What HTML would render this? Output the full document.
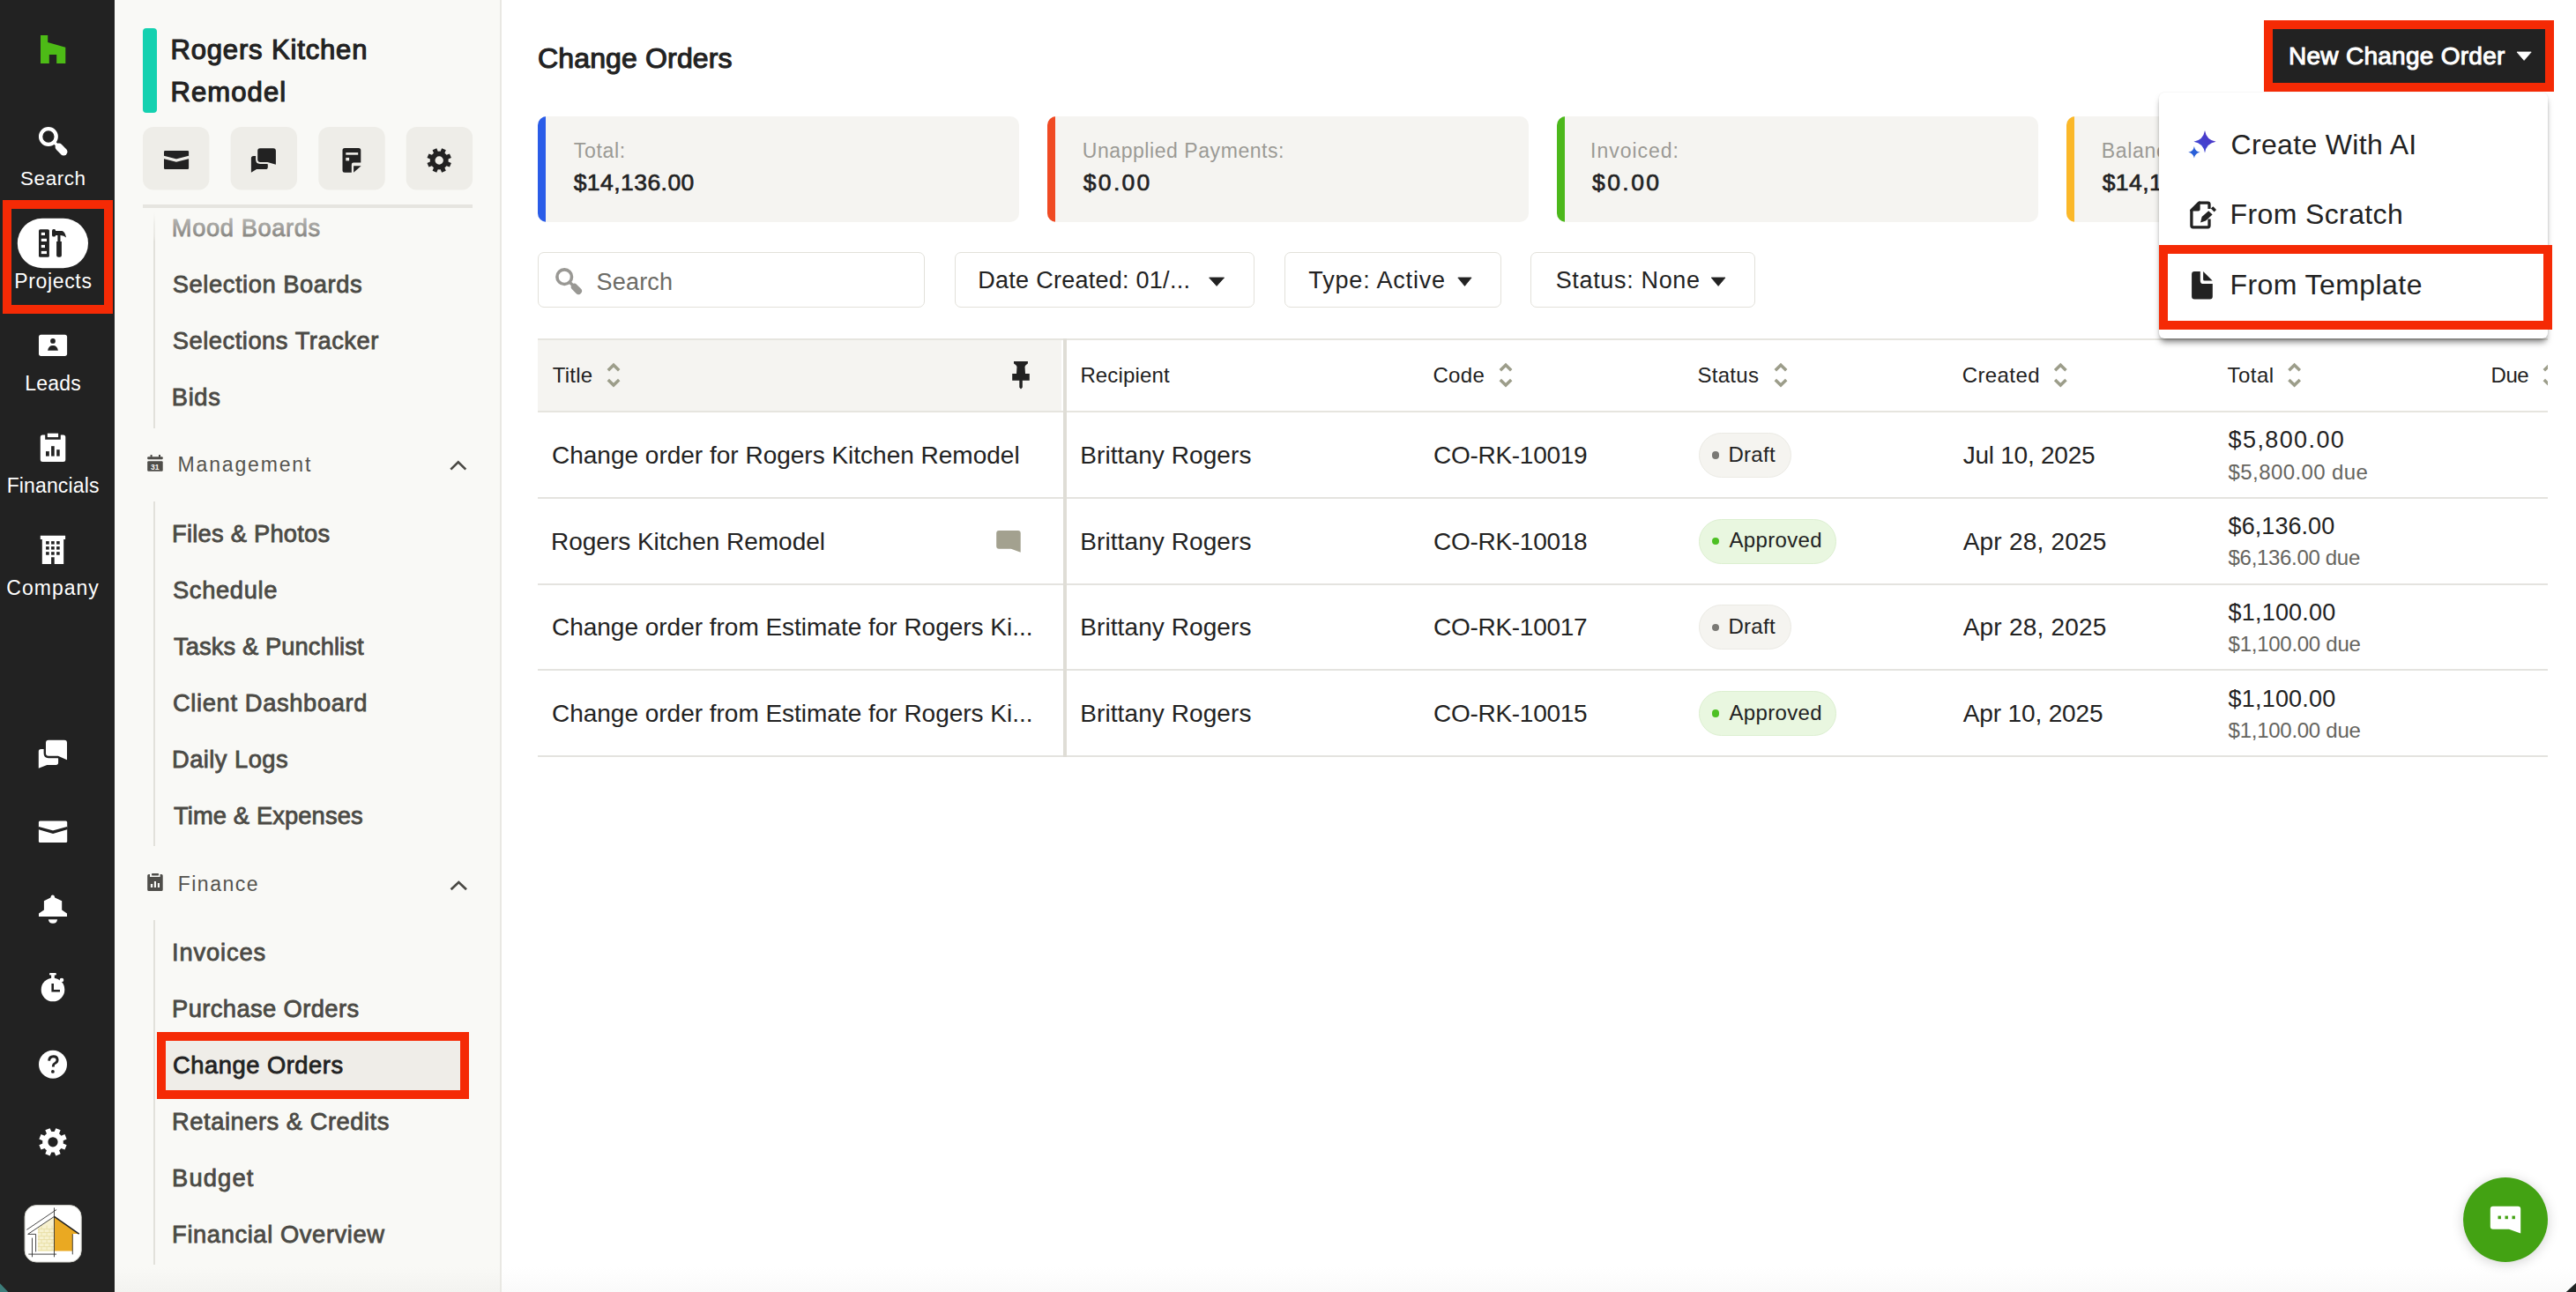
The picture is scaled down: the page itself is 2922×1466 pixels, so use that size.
<!DOCTYPE html>
<html><head><meta charset="utf-8"><style>
html,body{margin:0;padding:0;}
body{width:2922px;height:1466px;overflow:hidden;position:relative;background:#fff;font-family:"Liberation Sans", sans-serif;}
.b{position:absolute;}
.t{position:absolute;white-space:nowrap;line-height:1;z-index:3;}
.dd{z-index:7 !important;}
.ov{position:absolute;left:0;top:0;z-index:8;pointer-events:none;}
</style></head><body>
<div class="b" style="left:0px;top:0px;width:130px;height:1466px;background:#222222"></div><div class="b" style="left:130px;top:0px;width:438px;height:1466px;background:#f9f9f6"></div><div class="b" style="left:567.3px;top:0px;width:1.4px;height:1466px;background:#e9e8e3"></div><div class="b" style="left:2.7px;top:226.7px;width:125.6px;height:129.5px;border:10.5px solid #f52a05;box-sizing:border-box"></div><div class="b" style="left:161.5px;top:232px;width:374.5px;height:4px;background:#e6e5e0"></div><div class="b" style="left:161.5px;top:236px;width:374.5px;height:38px;background:linear-gradient(rgba(249,249,246,0.85) 0px,rgba(249,249,246,0.6) 13px,rgba(249,249,246,0.35) 32px,rgba(249,249,246,0) 38px);z-index:4"></div><div class="b" style="left:174.3px;top:240px;width:1.5px;height:246px;background:linear-gradient(#f9f9f6 0,#e2e1db 14px)"></div><div class="b" style="left:174.3px;top:569px;width:1.5px;height:391px;background:#e2e1db"></div><div class="b" style="left:174.3px;top:1044px;width:1.5px;height:391px;background:#e2e1db"></div><div class="b" style="left:178px;top:1170.8px;width:354.2px;height:75.9px;background:#efede8;border:10px solid #f52a05;box-sizing:border-box"></div><div class="b" style="left:130px;top:1438px;width:437px;height:28px;background:linear-gradient(#f9f9f600,#f3f3f0)"></div><div class="b" style="left:568.7px;top:1438px;width:2353.3px;height:28px;background:linear-gradient(#ffffff00,#fafafa)"></div><div class="b" style="left:610px;top:131.8px;width:546px;height:120.5px;background:#f5f4f1;border-radius:10px;overflow:hidden"><div style="position:absolute;left:0;top:0;width:8.5px;height:100%;background:#2a5ce8"></div></div><div class="b" style="left:1188px;top:131.8px;width:546px;height:120.5px;background:#f5f4f1;border-radius:10px;overflow:hidden"><div style="position:absolute;left:0;top:0;width:8.5px;height:100%;background:#f04a23"></div></div><div class="b" style="left:1766px;top:131.8px;width:546px;height:120.5px;background:#f5f4f1;border-radius:10px;overflow:hidden"><div style="position:absolute;left:0;top:0;width:8.5px;height:100%;background:#4cb81b"></div></div><div class="b" style="left:2344px;top:131.8px;width:546px;height:120.5px;background:#f5f4f1;border-radius:10px;overflow:hidden"><div style="position:absolute;left:0;top:0;width:8.5px;height:100%;background:#fbb829"></div></div><div class="b" style="left:2568px;top:23.2px;width:329px;height:80.5px;background:#f52a05"></div><div class="b" style="left:2578px;top:32.5px;width:309px;height:61px;background:#222222"></div><div class="b" style="left:610.4px;top:286.3px;width:438.9px;height:62.9px;border:1.6px solid #e2e1da;border-radius:7px;box-sizing:border-box;background:#fff"></div><div class="b" style="left:1082.6px;top:286.3px;width:340.8px;height:62.9px;border:1.6px solid #e2e1da;border-radius:7px;box-sizing:border-box;background:#fff"></div><div class="b" style="left:1456.8px;top:286.3px;width:246.4px;height:62.9px;border:1.6px solid #e2e1da;border-radius:7px;box-sizing:border-box;background:#fff"></div><div class="b" style="left:1736.4px;top:286.3px;width:255px;height:62.9px;border:1.6px solid #e2e1da;border-radius:7px;box-sizing:border-box;background:#fff"></div><div class="b" style="left:610px;top:384px;width:2280px;height:2px;background:#e6e5df"></div><div class="b" style="left:610px;top:386px;width:594px;height:80.2px;background:#f5f4f1"></div><div class="b" style="left:610px;top:466.2px;width:2280px;height:1.8px;background:#e6e5df"></div><div class="b" style="left:610px;top:563.8px;width:2280px;height:2px;background:#e4e3df"></div><div class="b" style="left:610px;top:661.6px;width:2280px;height:2px;background:#e4e3df"></div><div class="b" style="left:610px;top:759.3px;width:2280px;height:2px;background:#e4e3df"></div><div class="b" style="left:610px;top:857.3px;width:2280px;height:2px;background:#e4e3df"></div><div class="b" style="left:1206px;top:384px;width:3.8px;height:475px;background:#dfddd6"></div><div class="b" style="left:1926.8px;top:490.79999999999995px;width:105.2px;height:51.2px;background:#f5f4f0;border:1.5px solid #ebeae4;border-radius:26px;box-sizing:border-box"></div><div class="b" style="left:1941.7px;top:512.1px;width:8.6px;height:8.6px;background:#7a7975;border-radius:50%"></div><div class="b" style="left:1926.8px;top:588.5px;width:156.5px;height:51.2px;background:#e9f7e0;border:1.5px solid #dcefd0;border-radius:26px;box-sizing:border-box"></div><div class="b" style="left:1941.7px;top:609.8000000000001px;width:8.6px;height:8.6px;background:#4dc024;border-radius:50%"></div><div class="b" style="left:1926.8px;top:686.3px;width:105.2px;height:51.2px;background:#f5f4f0;border:1.5px solid #ebeae4;border-radius:26px;box-sizing:border-box"></div><div class="b" style="left:1941.7px;top:707.6px;width:8.6px;height:8.6px;background:#7a7975;border-radius:50%"></div><div class="b" style="left:1926.8px;top:784.0px;width:156.5px;height:51.2px;background:#e9f7e0;border:1.5px solid #dcefd0;border-radius:26px;box-sizing:border-box"></div><div class="b" style="left:1941.7px;top:805.3000000000001px;width:8.6px;height:8.6px;background:#4dc024;border-radius:50%"></div>
<div class="b" style="left:2449.4px;top:104.7px;width:440.6px;height:279.3px;background:#fff;border-radius:6px;box-shadow:0 6px 7px -2px rgba(0,0,0,0.5),0 0 2px rgba(0,0,0,0.10);z-index:5"></div><div class="b" style="left:2449.4px;top:278px;width:445.3px;height:96px;border:10px solid #f52a05;box-sizing:border-box;z-index:6"></div><div class="b" style="left:2794px;top:1336.2px;width:96px;height:96px;border-radius:50%;background:#43a213;box-shadow:0 2px 14px rgba(0,0,0,0.18);z-index:5"></div>
<div class="t" style="left:23.00px;top:192.45px;font-size:22.5px;color:#ffffff;letter-spacing:0.565px;">Search</div><div class="t" style="left:16.20px;top:308.23px;font-size:23px;color:#ffffff;letter-spacing:0.660px;">Projects</div><div class="t" style="left:28.30px;top:424.33px;font-size:23px;color:#ffffff;letter-spacing:0.208px;">Leads</div><div class="t" style="left:7.65px;top:540.23px;font-size:23px;color:#ffffff;letter-spacing:0.139px;">Financials</div><div class="t" style="left:7.30px;top:656.03px;font-size:23px;color:#ffffff;letter-spacing:1.011px;">Company</div><div class="t" style="left:193.40px;top:41.15px;font-size:31px;color:#222;letter-spacing:0.854px;-webkit-text-stroke:1.15px #222;">Rogers Kitchen</div><div class="t" style="left:193.40px;top:88.55px;font-size:31px;color:#222;letter-spacing:1.121px;-webkit-text-stroke:1.15px #222;">Remodel</div><div class="t" style="left:194.80px;top:244.79px;font-size:27.3px;color:#4b4a45;letter-spacing:0.609px;-webkit-text-stroke:0.8px #4b4a45;">Mood Boards</div><div class="t" style="left:195.80px;top:308.79px;font-size:27.3px;color:#4b4a45;letter-spacing:0.565px;-webkit-text-stroke:0.8px #4b4a45;">Selection Boards</div><div class="t" style="left:195.80px;top:372.79px;font-size:27.3px;color:#4b4a45;letter-spacing:0.527px;-webkit-text-stroke:0.8px #4b4a45;">Selections Tracker</div><div class="t" style="left:194.80px;top:436.79px;font-size:27.3px;color:#4b4a45;letter-spacing:0.649px;-webkit-text-stroke:0.8px #4b4a45;">Bids</div><div class="t" style="left:201.60px;top:516.33px;font-size:23px;color:#55544f;letter-spacing:1.838px;">Management</div><div class="t" style="left:195.00px;top:591.59px;font-size:27.3px;color:#4b4a45;letter-spacing:0.243px;-webkit-text-stroke:0.8px #4b4a45;">Files &amp; Photos</div><div class="t" style="left:196.00px;top:655.59px;font-size:27.3px;color:#4b4a45;letter-spacing:0.651px;-webkit-text-stroke:0.8px #4b4a45;">Schedule</div><div class="t" style="left:197.00px;top:719.59px;font-size:27.3px;color:#4b4a45;letter-spacing:0.105px;-webkit-text-stroke:0.8px #4b4a45;">Tasks &amp; Punchlist</div><div class="t" style="left:196.00px;top:783.59px;font-size:27.3px;color:#4b4a45;letter-spacing:0.638px;-webkit-text-stroke:0.8px #4b4a45;">Client Dashboard</div><div class="t" style="left:195.00px;top:847.59px;font-size:27.3px;color:#4b4a45;letter-spacing:0.456px;-webkit-text-stroke:0.8px #4b4a45;">Daily Logs</div><div class="t" style="left:197.00px;top:911.59px;font-size:27.3px;color:#4b4a45;letter-spacing:0.125px;-webkit-text-stroke:0.8px #4b4a45;">Time &amp; Expenses</div><div class="t" style="left:201.70px;top:992.43px;font-size:23px;color:#55544f;letter-spacing:1.511px;">Finance</div><div class="t" style="left:195.10px;top:1066.79px;font-size:27.3px;color:#4b4a45;letter-spacing:0.859px;-webkit-text-stroke:0.8px #4b4a45;">Invoices</div><div class="t" style="left:195.10px;top:1130.79px;font-size:27.3px;color:#4b4a45;letter-spacing:0.402px;-webkit-text-stroke:0.8px #4b4a45;">Purchase Orders</div><div class="t" style="left:196.10px;top:1194.79px;font-size:27.3px;color:#222;letter-spacing:0.527px;-webkit-text-stroke:0.8px #222;">Change Orders</div><div class="t" style="left:195.10px;top:1258.79px;font-size:27.3px;color:#4b4a45;letter-spacing:0.533px;-webkit-text-stroke:0.8px #4b4a45;">Retainers &amp; Credits</div><div class="t" style="left:195.10px;top:1322.79px;font-size:27.3px;color:#4b4a45;letter-spacing:1.154px;-webkit-text-stroke:0.8px #4b4a45;">Budget</div><div class="t" style="left:195.10px;top:1386.79px;font-size:27.3px;color:#4b4a45;letter-spacing:0.608px;-webkit-text-stroke:0.8px #4b4a45;">Financial Overview</div><div class="t" style="left:610.00px;top:49.51px;font-size:32px;color:#222;letter-spacing:0.152px;-webkit-text-stroke:1.1px #222;">Change Orders</div><div class="t" style="left:2596.00px;top:50.39px;font-size:28px;color:#fff;letter-spacing:0.273px;-webkit-text-stroke:1.0px #fff;">New Change Order</div><div class="t" style="left:650.70px;top:160.13px;font-size:23px;color:#9b9a95;letter-spacing:0.703px;">Total:</div><div class="t" style="left:1227.80px;top:160.13px;font-size:23px;color:#9b9a95;letter-spacing:0.559px;">Unapplied Payments:</div><div class="t" style="left:1804.00px;top:160.13px;font-size:23px;color:#9b9a95;letter-spacing:0.992px;">Invoiced:</div><div class="t" style="left:2383.70px;top:160.13px;font-size:23px;color:#9b9a95;letter-spacing:0.698px;">Balance:</div><div class="t" style="left:650.70px;top:194.36px;font-size:26.5px;color:#222;letter-spacing:0.445px;-webkit-text-stroke:0.65px #222;">$14,136.00</div><div class="t" style="left:1228.80px;top:194.36px;font-size:26.5px;color:#222;letter-spacing:2.306px;-webkit-text-stroke:0.65px #222;">$0.00</div><div class="t" style="left:1806.00px;top:194.36px;font-size:26.5px;color:#222;letter-spacing:2.431px;-webkit-text-stroke:0.65px #222;">$0.00</div><div class="t" style="left:2384.70px;top:194.36px;font-size:26.5px;color:#222;letter-spacing:0.445px;-webkit-text-stroke:0.65px #222;">$14,136.00</div><div class="t" style="left:676.60px;top:307.44px;font-size:27px;color:#6c6b66;letter-spacing:0.174px;">Search</div><div class="t" style="left:1109.30px;top:304.84px;font-size:27px;color:#222;letter-spacing:0.262px;">Date Created: 01/...</div><div class="t" style="left:1484.30px;top:304.84px;font-size:27px;color:#222;letter-spacing:0.841px;">Type: Active</div><div class="t" style="left:1764.70px;top:304.84px;font-size:27px;color:#222;letter-spacing:0.657px;">Status: None</div><div class="t" style="left:626.70px;top:414.18px;font-size:24px;color:#222;letter-spacing:0.225px;">Title</div><div class="t" style="left:1225.40px;top:414.18px;font-size:24px;color:#222;letter-spacing:0.152px;">Recipient</div><div class="t" style="left:1625.40px;top:414.18px;font-size:24px;color:#222;letter-spacing:0.391px;">Code</div><div class="t" style="left:1925.40px;top:414.18px;font-size:24px;color:#222;letter-spacing:0.312px;">Status</div><div class="t" style="left:2225.70px;top:414.18px;font-size:24px;color:#222;letter-spacing:0.411px;">Created</div><div class="t" style="left:2526.60px;top:414.18px;font-size:24px;color:#222;letter-spacing:0.434px;">Total</div><div class="t" style="left:2825.50px;top:414.18px;font-size:24px;color:#222;letter-spacing:-0.440px;">Due</div><div class="t" style="left:626.00px;top:502.89px;font-size:28px;color:#222;letter-spacing:-0.003px;">Change order for Rogers Kitchen Remodel</div><div class="t" style="left:1225.30px;top:502.89px;font-size:28px;color:#222;letter-spacing:0.081px;">Brittany Rogers</div><div class="t" style="left:1626.00px;top:502.89px;font-size:28px;color:#222;letter-spacing:-0.283px;">CO-RK-10019</div><div class="t" style="left:1960.50px;top:503.68px;font-size:24px;color:#222;letter-spacing:0.265px;">Draft</div><div class="t" style="left:2226.70px;top:502.89px;font-size:28px;color:#222;letter-spacing:-0.245px;">Jul 10, 2025</div><div class="t" style="left:2527.60px;top:486.14px;font-size:27px;color:#222;letter-spacing:1.388px;">$5,800.00</div><div class="t" style="left:2527.60px;top:523.68px;font-size:24px;color:#666560;letter-spacing:0.397px;">$5,800.00 due</div><div class="t" style="left:625.00px;top:600.69px;font-size:28px;color:#222;letter-spacing:-0.012px;">Rogers Kitchen Remodel</div><div class="t" style="left:1225.30px;top:600.69px;font-size:28px;color:#222;letter-spacing:0.081px;">Brittany Rogers</div><div class="t" style="left:1626.00px;top:600.69px;font-size:28px;color:#222;letter-spacing:-0.283px;">CO-RK-10018</div><div class="t" style="left:1961.50px;top:601.48px;font-size:24px;color:#222;letter-spacing:0.344px;">Approved</div><div class="t" style="left:2226.70px;top:600.69px;font-size:28px;color:#222;letter-spacing:0.212px;">Apr 28, 2025</div><div class="t" style="left:2527.60px;top:583.94px;font-size:27px;color:#222;letter-spacing:0.063px;">$6,136.00</div><div class="t" style="left:2527.60px;top:621.48px;font-size:24px;color:#666560;letter-spacing:-0.319px;">$6,136.00 due</div><div class="t" style="left:626.00px;top:698.39px;font-size:28px;color:#222;letter-spacing:-0.018px;">Change order from Estimate for Rogers Ki...</div><div class="t" style="left:1225.30px;top:698.39px;font-size:28px;color:#222;letter-spacing:0.081px;">Brittany Rogers</div><div class="t" style="left:1626.00px;top:698.39px;font-size:28px;color:#222;letter-spacing:-0.283px;">CO-RK-10017</div><div class="t" style="left:1960.50px;top:699.18px;font-size:24px;color:#222;letter-spacing:0.265px;">Draft</div><div class="t" style="left:2226.70px;top:698.39px;font-size:28px;color:#222;letter-spacing:0.212px;">Apr 28, 2025</div><div class="t" style="left:2527.60px;top:681.64px;font-size:27px;color:#222;letter-spacing:0.188px;">$1,100.00</div><div class="t" style="left:2527.60px;top:719.18px;font-size:24px;color:#666560;letter-spacing:-0.269px;">$1,100.00 due</div><div class="t" style="left:626.00px;top:796.49px;font-size:28px;color:#222;letter-spacing:-0.018px;">Change order from Estimate for Rogers Ki...</div><div class="t" style="left:1225.30px;top:796.49px;font-size:28px;color:#222;letter-spacing:0.081px;">Brittany Rogers</div><div class="t" style="left:1626.00px;top:796.49px;font-size:28px;color:#222;letter-spacing:-0.283px;">CO-RK-10015</div><div class="t" style="left:1961.50px;top:797.28px;font-size:24px;color:#222;letter-spacing:0.344px;">Approved</div><div class="t" style="left:2226.70px;top:796.49px;font-size:28px;color:#222;letter-spacing:-0.134px;">Apr 10, 2025</div><div class="t" style="left:2527.60px;top:779.74px;font-size:27px;color:#222;letter-spacing:0.188px;">$1,100.00</div><div class="t" style="left:2527.60px;top:817.28px;font-size:24px;color:#666560;letter-spacing:-0.269px;">$1,100.00 due</div><div class="t" style="left:2530.50px;top:147.91px;font-size:32px;color:#222;letter-spacing:0.341px;z-index:7;">Create With AI</div><div class="t" style="left:2529.50px;top:226.91px;font-size:32px;color:#222;letter-spacing:0.388px;z-index:7;">From Scratch</div><div class="t" style="left:2529.50px;top:306.71px;font-size:32px;color:#222;letter-spacing:0.426px;z-index:7;">From Template</div>
<svg class="ov" width="2922" height="1466" viewBox="0 0 2922 1466"><path d="M46 40 H54.2 V48 L74.3 53.8 V72 H64.2 V62 H55.8 V72 H46 Z" fill="#4dbb16"/><circle cx="54.9" cy="155" r="8.8" fill="none" stroke="#fff" stroke-width="4.3"/><path d="M60 160 L65 165" stroke="#fff" stroke-width="3.6"/><path d="M66.8 166.8 L72.2 172.2" stroke="#fff" stroke-width="8.4" stroke-linecap="round"/><rect x="19.8" y="247.8" width="80.2" height="56.4" rx="28.2" fill="#fff"/><rect x="44" y="260.2" width="11.9" height="31.6" rx="1.6" fill="#222"/><rect x="46.8" y="263.8" width="4.2" height="3.2" fill="#fff"/><rect x="46.8" y="270.8" width="6.2" height="3.2" fill="#fff"/><rect x="46.8" y="277.9" width="4.2" height="3.2" fill="#fff"/><rect x="46.8" y="284.9" width="6.2" height="3.2" fill="#fff"/><rect x="59" y="260.1" width="4.2" height="8.5" rx="1.9" fill="#222"/><path d="M62 262 H70.5 Q73.6 262.6 75.1 269.4 Q72.5 267.3 68.8 267.1 H62 Z" fill="#222"/><rect x="65.4" y="266" width="3.1" height="8.5" fill="#222"/><path d="M64.1 273.9 H69.9 V289.7 Q69.9 291.7 67.9 291.7 H66.1 Q64.1 291.7 64.1 289.7 Z" fill="#222"/><rect x="44" y="379.7" width="32.1" height="24.2" rx="2.6" fill="#fff"/><circle cx="60" cy="386.9" r="2.9" fill="#222"/><path d="M54.1 397.7 Q55 392.1 60 392.1 Q65 392.1 65.9 397.7 Z" fill="#222"/><path fill-rule="evenodd" d="M48.3 493.6 H51.2 V498.8 H68.8 V493.6 H71.8 Q74.3 493.6 74.3 496.1 V521.5 Q74.3 524 71.8 524 H48.3 Q45.8 524 45.8 521.5 V496.1 Q45.8 493.6 48.3 493.6 Z" fill="#fff"/><rect x="53.8" y="491.7" width="12.3" height="4.4" fill="#fff"/><rect x="52" y="512.1" width="3.8" height="5.5" fill="#222"/><rect x="58.1" y="506.2" width="3.6" height="11.4" fill="#222"/><rect x="64.2" y="510.2" width="3.5" height="7.4" fill="#222"/><path d="M45.8 607.8 H74.1 V611.9 H72.2 V640 H61.7 V632.2 H58.1 V640 H47.8 V611.9 H45.8 Z" fill="#fff"/><rect x="52.1" y="614.1" width="3.6" height="3.5" fill="#222"/><rect x="58.1" y="614.1" width="3.6" height="3.5" fill="#222"/><rect x="64.1" y="614.1" width="3.6" height="3.5" fill="#222"/><rect x="52.1" y="620.1" width="3.6" height="3.5" fill="#222"/><rect x="58.1" y="620.1" width="3.6" height="3.5" fill="#222"/><rect x="64.1" y="620.1" width="3.6" height="3.5" fill="#222"/><rect x="52.1" y="626.2" width="3.6" height="3.5" fill="#222"/><rect x="58.1" y="626.2" width="3.6" height="3.5" fill="#222"/><rect x="64.1" y="626.2" width="3.6" height="3.5" fill="#222"/><path d="M46.5 850 H52 V855 Q52 858.5 55.5 858.5 H66.1 V865.3 Q66.1 868 63.4 868 H53.3 L43.8 871.8 V852.7 Q43.8 850 46.5 850 Z" fill="#fff"/><path d="M55 839.8 H73 Q76 839.8 76 842.8 V862.3 L65.9 857.8 H55 Q52 857.8 52 854.8 V842.8 Q52 839.8 55 839.8 Z" fill="none" stroke="#222" stroke-width="4.8"/><path d="M55 839.8 H73 Q76 839.8 76 842.8 V862.3 L65.9 857.8 H55 Q52 857.8 52 854.8 V842.8 Q52 839.8 55 839.8 Z" fill="#fff"/><rect x="43.9" y="931.6" width="32.3" height="24.4" rx="1.5" fill="#fff"/><path d="M43.5 939.5 L60.1 944.2 L76.5 939.5" fill="none" stroke="#222" stroke-width="3.3"/><path d="M59.8 1015.6 Q61.8 1015.6 62.2 1018.5 L70.2 1022.3 V1032.5 L76 1036.5 V1040 H44 V1036.5 L49.9 1032.5 V1022.3 L57.4 1018.5 Q57.8 1015.6 59.8 1015.6 Z" fill="#fff"/><path d="M54.9 1043.2 H65.1 Q64.6 1047.8 60 1047.8 Q55.4 1047.8 54.9 1043.2 Z" fill="#fff"/><circle cx="60" cy="1123" r="13.3" fill="#fff"/><rect x="56" y="1104" width="7.9" height="2.6" rx="1" fill="#fff"/><rect x="58.1" y="1105" width="3.7" height="6" fill="#fff"/><circle cx="70" cy="1112" r="2.3" fill="#fff"/><path d="M58.4 1116 H61 V1123 H68 V1125.6 H58.4 Z" fill="#222"/><circle cx="60" cy="1207.8" r="16" fill="#fff"/><path d="M55.6 1203.6 Q56 1198.7 60.5 1198.7 Q65 1198.7 65.1 1202.6 Q65.1 1205.3 62.4 1206.5 Q60.4 1207.4 60.4 1209.3 V1210.6" fill="none" stroke="#222" stroke-width="2.9"/><circle cx="59.9" cy="1215.9" r="1.9" fill="#222"/><path fill-rule="evenodd" d="M61.66 1284.12 L63.37 1280.16 L68.68 1282.36 L67.08 1286.36 L67.73 1286.89 L68.34 1287.46 L68.91 1288.07 L69.44 1288.72 L73.44 1287.12 L75.64 1292.43 L71.68 1294.14 L71.77 1294.97 L71.80 1295.80 L71.77 1296.63 L71.68 1297.46 L75.64 1299.17 L73.44 1304.48 L69.44 1302.88 L68.91 1303.53 L68.34 1304.14 L67.73 1304.71 L67.08 1305.24 L68.68 1309.24 L63.37 1311.44 L61.66 1307.48 L60.83 1307.57 L60.00 1307.60 L59.17 1307.57 L58.34 1307.48 L56.63 1311.44 L51.32 1309.24 L52.92 1305.24 L52.27 1304.71 L51.66 1304.14 L51.09 1303.53 L50.56 1302.88 L46.56 1304.48 L44.36 1299.17 L48.32 1297.46 L48.23 1296.63 L48.20 1295.80 L48.23 1294.97 L48.32 1294.14 L44.36 1292.43 L46.56 1287.12 L50.56 1288.72 L51.09 1288.07 L51.66 1287.46 L52.27 1286.89 L52.92 1286.36 L51.32 1282.36 L56.63 1280.16 L58.34 1284.12 L59.17 1284.03 L60.00 1284.00 L60.83 1284.03 Z M65.60 1295.80 A5.6 5.6 0 1 0 54.40 1295.80 A5.6 5.6 0 1 0 65.60 1295.80 Z" fill="#fff"/><rect x="28.1" y="1367.6" width="64.1" height="64.4" rx="13" fill="#fff" stroke="#cfcfc8" stroke-width="1"/><path d="M42.9 1392.9 L61.5 1380.4 L61.5 1420.1 L42.9 1420.1 Z" fill="#f7f1cf"/><path d="M42.9 1394.6 H61.5 M47.1 1390.6 V1394.6 M53.1 1390.6 V1394.6 M59.1 1390.6 V1394.6 M42.9 1398.6 H61.5 M44.1 1394.6 V1398.6 M50.1 1394.6 V1398.6 M56.1 1394.6 V1398.6 M42.9 1402.6 H61.5 M47.1 1398.6 V1402.6 M53.1 1398.6 V1402.6 M59.1 1398.6 V1402.6 M42.9 1406.6 H61.5 M44.1 1402.6 V1406.6 M50.1 1402.6 V1406.6 M56.1 1402.6 V1406.6 M42.9 1410.6 H61.5 M47.1 1406.6 V1410.6 M53.1 1406.6 V1410.6 M59.1 1406.6 V1410.6 M42.9 1414.6 H61.5 M44.1 1410.6 V1414.6 M50.1 1410.6 V1414.6 M56.1 1410.6 V1414.6 M42.9 1418.6 H61.5 M47.1 1414.6 V1418.6 M53.1 1414.6 V1418.6 M59.1 1414.6 V1418.6 " stroke="#e6dca0" stroke-width="0.8" fill="none"/><path d="M61.5 1380.4 L89.7 1400.1 H82.3 V1419.6 H61.5 Z" fill="#eaa922"/><path d="M61.5 1370.4 V1426.3 M30.3 1395.4 L64.1 1372.5 M31.7 1400.4 L61.5 1380.4 M31.7 1400.4 H40.6 V1420.4 M36.5 1404.6 V1426.3 M32.3 1423.1 H64.1 M82.3 1400.1 V1423.4" fill="none" stroke="#333" stroke-width="0.9"/><path d="M61.5 1380.4 L89.7 1400.1" stroke="#222" stroke-width="1.6"/><rect x="162" y="32" width="16" height="96" rx="4" fill="#14d1b0"/><rect x="162" y="144" width="75.4" height="71.5" rx="12" fill="#eeede8"/><rect x="261.6" y="144" width="75.4" height="71.5" rx="12" fill="#eeede8"/><rect x="361.3" y="144" width="75.4" height="71.5" rx="12" fill="#eeede8"/><rect x="460.7" y="144" width="75.4" height="71.5" rx="12" fill="#eeede8"/><rect x="186" y="171" width="28.1" height="21" rx="1.2" fill="#222"/><path d="M185.5 178.4 L200 182.0 L214.5 178.4" fill="none" stroke="#eeede8" stroke-width="3.2"/><path d="M287.5 176.9 H292.2 V181 Q292.2 184.6 295.8 184.6 H303.8 V189.4 Q303.8 192 301.2 192 H291 L284.9 195.8 V179.5 Q284.9 176.9 287.5 176.9 Z" fill="#222"/><path d="M295 168.2 H310 Q312.9 168.2 312.9 171.1 V186.8 L303.5 183.9 H295 Q292.2 183.9 292.2 181.1 V171.1 Q292.2 168.2 295 168.2 Z" fill="none" stroke="#eeede8" stroke-width="4.2"/><path d="M295 168.2 H310 Q312.9 168.2 312.9 171.1 V186.8 L303.5 183.9 H295 Q292.2 183.9 292.2 181.1 V171.1 Q292.2 168.2 295 168.2 Z" fill="#222"/><path d="M391 167.9 H406.8 Q409.3 167.9 409.3 170.4 V184.6 H401 Q398.8 184.6 398.8 186.8 V195.8 H391 Q388.5 195.8 388.5 193.3 V170.4 Q388.5 167.9 391 167.9 Z" fill="#222"/><rect x="392.3" y="173.1" width="13.9" height="2.6" fill="#eeede8"/><rect x="392.3" y="178.9" width="3.8" height="3.5" fill="#eeede8"/><path d="M401.1 188.3 H409.6 L401.1 195.7 Z" fill="#222"/><path fill-rule="evenodd" d="M499.67 171.70 L501.15 168.31 L505.79 170.24 L504.44 173.68 L505.02 174.15 L505.55 174.65 L506.05 175.18 L506.52 175.76 L509.96 174.41 L511.89 179.05 L508.50 180.53 L508.57 181.27 L508.60 182.00 L508.57 182.73 L508.50 183.47 L511.89 184.95 L509.96 189.59 L506.52 188.24 L506.05 188.82 L505.55 189.35 L505.02 189.85 L504.44 190.32 L505.79 193.76 L501.15 195.69 L499.67 192.30 L498.93 192.37 L498.20 192.40 L497.47 192.37 L496.73 192.30 L495.25 195.69 L490.61 193.76 L491.96 190.32 L491.38 189.85 L490.85 189.35 L490.35 188.82 L489.88 188.24 L486.44 189.59 L484.51 184.95 L487.90 183.47 L487.83 182.73 L487.80 182.00 L487.83 181.27 L487.90 180.53 L484.51 179.05 L486.44 174.41 L489.88 175.76 L490.35 175.18 L490.85 174.65 L491.38 174.15 L491.96 173.68 L490.61 170.24 L495.25 168.31 L496.73 171.70 L497.47 171.63 L498.20 171.60 L498.93 171.63 Z M502.90 182.00 A4.7 4.7 0 1 0 493.50 182.00 A4.7 4.7 0 1 0 502.90 182.00 Z" fill="#222"/><rect x="167.2" y="518.3" width="17.5" height="3" rx="1" fill="#4f4e4a"/><rect x="170.6" y="516" width="2" height="3" fill="#4f4e4a"/><rect x="180" y="516" width="2" height="3" fill="#4f4e4a"/><rect x="167.2" y="523.3" width="17.5" height="11.5" rx="1.2" fill="#4f4e4a"/><text x="175.8" y="532.6" font-family="Liberation Sans" font-size="8.5" font-weight="bold" fill="#f9f9f6" text-anchor="middle">31</text><path d="M168.7 992 H170 V995 H181.6 V992 H183.2 Q184.7 992 184.7 993.5 V1009.4 Q184.7 1010.9 183.2 1010.9 H168.7 Q167.2 1010.9 167.2 1009.4 V993.5 Q167.2 992 168.7 992 Z" fill="#4f4e4a"/><rect x="172" y="991.1" width="8.1" height="2.5" rx="0.8" fill="#4f4e4a"/><rect x="170.9" y="1003" width="2.3" height="4" fill="#f9f9f6"/><rect x="174.9" y="1000" width="2.1" height="7" fill="#f9f9f6"/><rect x="178.9" y="1002" width="2.1" height="5" fill="#f9f9f6"/><path d="M511.3 532.6 L519.8 524.4 L528.3 532.6" fill="none" stroke="#4a4944" stroke-width="2.7"/><path d="M511.6 1009.3 L520.3 1001 L529 1009.3" fill="none" stroke="#4a4944" stroke-width="2.7"/><path d="M2855 59 L2871.2 59 L2863.1 68.4 Z" fill="#fff" stroke="#fff" stroke-width="0.8" stroke-linejoin="round"/><circle cx="640.2" cy="314.2" r="8.3" fill="none" stroke="#999894" stroke-width="3.6"/><path d="M645.5 319.5 L650 324" stroke="#999894" stroke-width="3.4"/><path d="M651.6 325.6 L656.2 330.2" stroke="#999894" stroke-width="7.6" stroke-linecap="round"/><path d="M1371.6 315 L1388.6 315 L1380.1 324.4 Z" fill="#222" stroke="#222" stroke-width="0.8" stroke-linejoin="round"/><path d="M1653.8 315 L1669.1 315 L1661.45 324.4 Z" fill="#222" stroke="#222" stroke-width="0.8" stroke-linejoin="round"/><path d="M1941.2 315 L1957.0 315 L1949.1000000000001 324.4 Z" fill="#222" stroke="#222" stroke-width="0.8" stroke-linejoin="round"/><path d="M689.8000000000001 420.3 L696.0 414.3 L702.2 420.3 M689.8000000000001 431.0 L696.0 437.0 L702.2 431.0" fill="none" stroke="#9c9d8a" stroke-width="3.5" stroke-linejoin="miter"/><path d="M1701.8 420.3 L1708.0 414.3 L1714.1999999999998 420.3 M1701.8 431.0 L1708.0 437.0 L1714.1999999999998 431.0" fill="none" stroke="#9c9d8a" stroke-width="3.5" stroke-linejoin="miter"/><path d="M2013.8 420.3 L2020.0 414.3 L2026.1999999999998 420.3 M2013.8 431.0 L2020.0 437.0 L2026.1999999999998 431.0" fill="none" stroke="#9c9d8a" stroke-width="3.5" stroke-linejoin="miter"/><path d="M2331.1 420.3 L2337.3 414.3 L2343.5 420.3 M2331.1 431.0 L2337.3 437.0 L2343.5 431.0" fill="none" stroke="#9c9d8a" stroke-width="3.5" stroke-linejoin="miter"/><path d="M2596.3999999999996 420.3 L2602.6 414.3 L2608.7999999999997 420.3 M2596.3999999999996 431.0 L2602.6 437.0 L2608.7999999999997 431.0" fill="none" stroke="#9c9d8a" stroke-width="3.5" stroke-linejoin="miter"/><clipPath id="dueclip"><rect x="2800" y="400" width="90" height="60"/></clipPath><g clip-path="url(#dueclip)"><path d="M2885.7999999999997 420.3 L2892.0 414.3 L2898.2 420.3 M2885.7999999999997 431.0 L2892.0 437.0 L2898.2 431.0" fill="none" stroke="#9c9d8a" stroke-width="3.5" stroke-linejoin="miter"/></g><path d="M1150 410 H1165.9 V412.5 Q1163 414 1162.5 416 L1163 424.1 H1167.8 V431.8 H1159.8 V439.5 L1158 441.5 L1156.3 439.5 V431.8 H1148.2 V424.1 H1153 L1153.5 416 Q1153 414 1150 412.5 Z" fill="#222"/><path d="M1133.2 601.9 H1154.7 Q1157.7 601.9 1157.7 604.9 V626.8 L1146.9 622.8 H1133.2 Q1130.2 622.8 1130.2 619.8 V604.9 Q1130.2 601.9 1133.2 601.9 Z" fill="#a3a18f"/><defs><linearGradient id="sg" x1="0" y1="1" x2="1" y2="0"><stop offset="0" stop-color="#3b4fd6"/><stop offset="1" stop-color="#5030c4"/></linearGradient></defs><path d="M2501 148.10000000000002 Q2502.764 159.02200000000002 2513.6 160.8 Q2502.764 162.578 2501 173.5 Q2499.236 162.578 2488.4 160.8 Q2499.236 159.02200000000002 2501 148.10000000000002 Z" fill="url(#sg)"/><path d="M2488.9 166.0 Q2489.838 171.848 2495.6 172.8 Q2489.838 173.752 2488.9 179.60000000000002 Q2487.962 173.752 2482.2000000000003 172.8 Q2487.962 171.848 2488.9 166.0 Z" fill="#2a5fd8"/><path d="M2494.2 230.1 H2504.3 Q2506 230.1 2506 231.8 V237" fill="none" stroke="#222" stroke-width="3.3"/><path d="M2506 248.5 V256.1 Q2506 257.8 2504.3 257.8 H2487.6 Q2485.9 257.8 2485.9 256.1 V238.6 L2494.6 230" fill="none" stroke="#222" stroke-width="3.3"/><path d="M2484.2 238.2 L2494.2 228.4 H2495.6 V237.4 Q2495.6 239.4 2493.6 239.4 H2484.2 Z" fill="#222"/><path d="M2496.1 252.6 L2497.6 246 L2505.2 239.2 L2509.6 243.6 L2502 250.6 Z" fill="#222"/><path d="M2507.8 236.6 L2510.4 234.3 L2514 237.9 L2511.6 240.4 Z" fill="#222"/><path d="M2489.1 308 H2495.8 V318.4 Q2495.8 322 2499.4 322 H2509.8 V336.5 Q2509.8 339.5 2506.8 339.5 H2489.1 Q2486.1 339.5 2486.1 336.5 V311 Q2486.1 308 2489.1 308 Z" fill="#222"/><path d="M2499.1 308 L2509.6 318.5 H2500.6 Q2499.1 318.5 2499.1 317 Z" fill="#222"/><path d="M2827.8 1368.7 H2856.2 Q2859.2 1368.7 2859.2 1371.7 V1399.5 L2846 1394.8 H2827.8 Q2824.8 1394.8 2824.8 1391.8 V1371.7 Q2824.8 1368.7 2827.8 1368.7 Z" fill="#fff"/><rect x="2833.5" y="1379.6" width="3.4" height="3.6" fill="#43a213"/><rect x="2841.5" y="1379.6" width="3.4" height="3.6" fill="#43a213"/><rect x="2849.5" y="1379.6" width="3.4" height="3.6" fill="#43a213"/><path d="M0 1456.2 V1466 H9.3 Z" fill="#3d7d7a"/><path d="M2922 1455.8 V1466 H2910.8 Z" fill="#1f2422"/></svg>
</body></html>
